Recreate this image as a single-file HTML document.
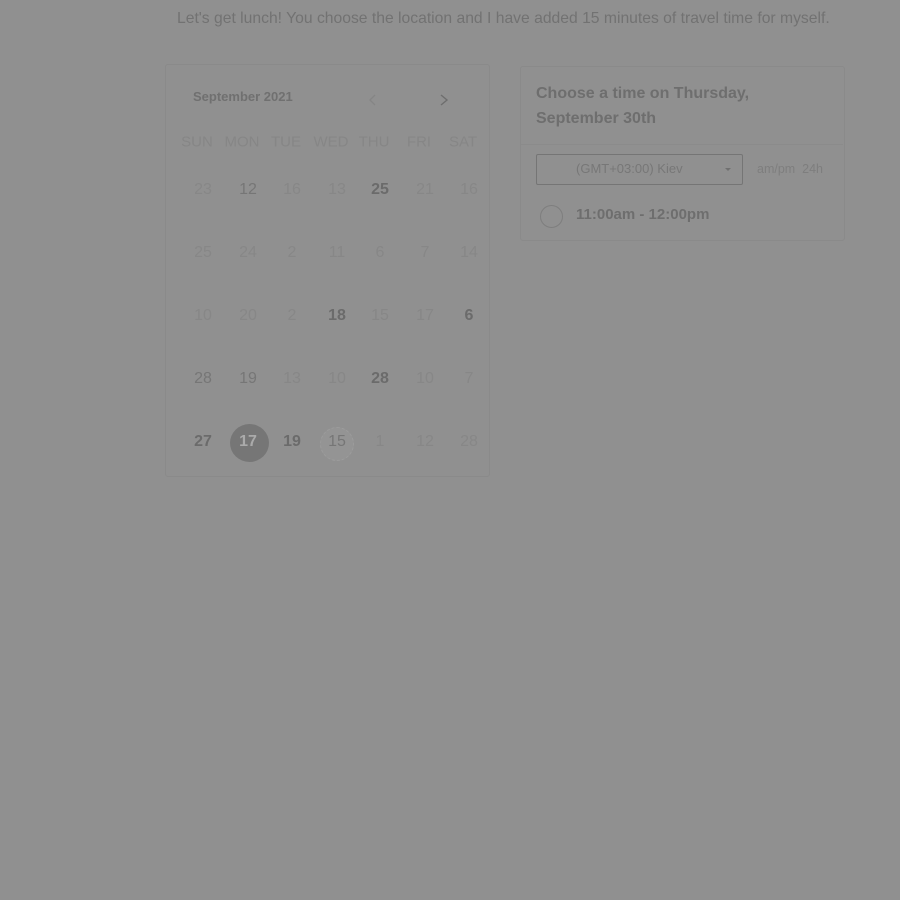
<!DOCTYPE html>
<html><head><meta charset="utf-8"><style>
body{margin:0;width:900px;height:900px;background:#909090;font-family:"Liberation Sans",sans-serif;position:relative;overflow:hidden}
.a{position:absolute}
.t{position:absolute;transform:translate(-50%,-50%);font-size:16px;white-space:nowrap}
.f{color:#878787}.m{color:#767676}.b{color:#6b6b6b;font-weight:bold}
.h{color:#868686;font-size:15px}
</style></head><body>
<div class="a" style="left:177px;top:10px;font-size:15.7px;color:#727272">Let's get lunch! You choose the location and I have added 15 minutes of travel time for myself.</div>
<div class="a" style="left:165px;top:64px;width:323px;height:411px;border:1px solid #8a8a8a;border-radius:3px"></div>
<div class="a" style="left:193px;top:89px;font-size:13px;font-weight:bold;color:#707070">September 2021</div>
<svg class="a" style="left:367px;top:93px" width="12" height="14"><path d="M8 2L3 7L8 12" stroke="#858585" stroke-width="1.3" fill="none"/></svg>
<svg class="a" style="left:438px;top:93px" width="12" height="14"><path d="M3 2L9 7L3 12" stroke="#6e6e6e" stroke-width="1.4" fill="none"/></svg>
<div class="a" style="left:520px;top:66px;width:323px;height:173px;border:1px solid #8a8a8a;border-radius:3px"></div>
<div class="a" style="left:521px;top:144px;width:322px;border-top:1px solid #8b8b8b"></div>
<div class="a" style="left:536px;top:81px;font-size:16px;line-height:25px;font-weight:bold;color:#6e6e6e">Choose a time on Thursday,<br>September 30th</div>
<div class="a" style="left:536px;top:154px;width:205px;height:29px;border:1px solid #757575;border-radius:2px"></div>
<div class="a" style="left:576px;top:161px;font-size:13px;color:#777">(GMT+03:00) Kiev</div>
<div class="a" style="left:725px;top:168px;border-left:3px solid transparent;border-right:3px solid transparent;border-top:3px solid #707070"></div>
<div class="a" style="left:757px;top:162px;font-size:12.5px;color:#7e7e7e">am/pm &nbsp;24h</div>
<div class="a" style="left:540px;top:205px;width:21px;height:21px;border:1.5px solid #7e7e7e;border-radius:50%"></div>
<div class="a" style="left:576px;top:206px;font-size:15px;font-weight:bold;color:#6e6e6e">11:00am - 12:00pm</div>
<div class="a" style="left:230px;top:424px;width:39px;height:38px;border-radius:50%;background:#767676"></div>
<div class="a" style="left:320px;top:427px;width:32px;height:32px;border-radius:50%;background:#949494;border:1px dashed #9c9c9c"></div>
<div id="c"></div>
<script>
var xs=[203,248,292,337,380,425,469],ys=[190,253,316,379,442];
var hd=["SUN","MON","TUE","WED","THU","FRI","SAT"],h="";
hd.forEach((d,i)=>h+=`<div class="t h" style="left:${xs[i]-6}px;top:142px">${d}</div>`);
var R=[["23f","12m","16f","13f","25b","21f","16f"],["25f","24f","2f","11f","6f","7f","14f"],["10f","20f","2f","18b","15f","17f","6b"],["28m","19m","13f","10f","28b","10f","7f"],["27b","17s","19b","15m","1f","12f","28f"]];
R.forEach((r,j)=>r.forEach((c,i)=>{var n=c.slice(0,-1),k=c.slice(-1);var st=k=="s"?'color:#aaa;font-weight:bold':'';h+=`<div class="t ${k=='s'?'':k}" style="left:${xs[i]}px;top:${ys[j]}px;${st}">${n}</div>`}));
document.getElementById("c").innerHTML=h;
</script>
</body></html>
